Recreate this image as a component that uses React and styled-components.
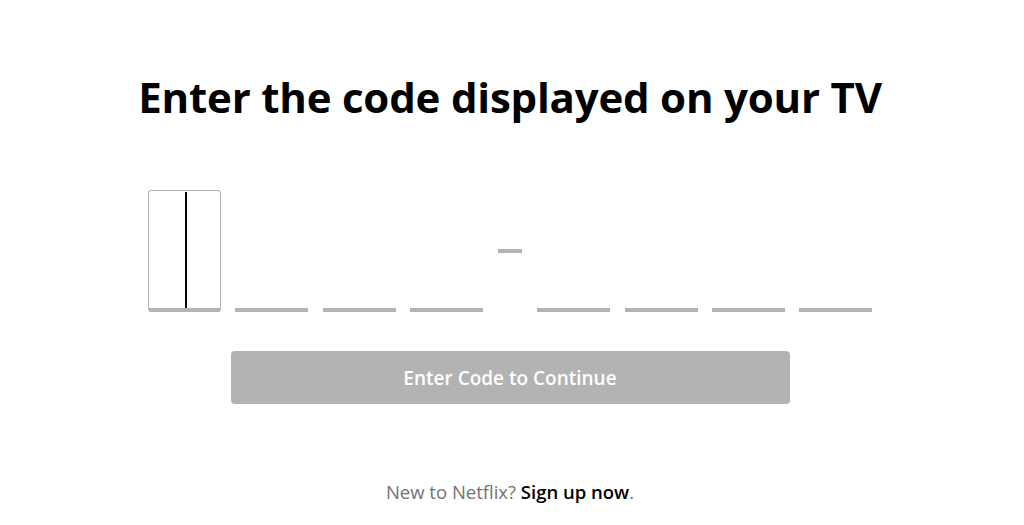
import * as React from 'react'
import styled, { createGlobalStyle } from 'styled-components'

const Global = createGlobalStyle`
  body {
    margin: 0;
    background: #fff;
    font-family: "Open Sans", "Noto Sans", "Liberation Sans", sans-serif;
  }
`

const Page = styled.main`
  display: flex;
  flex-direction: column;
  align-items: center;
  padding: 73px 4px 0 0;
`

const Title = styled.h1`
  margin: 0;
  font-size: 42px;
  line-height: 48px;
  font-weight: 700;
  color: #000;
  letter-spacing: -0.2px;
`

const CodeRow = styled.div`
  display: flex;
  align-items: stretch;
  gap: 14.25px;
  margin-top: 69px;
  height: 122px;
`

const Cell = styled.div`
  position: relative;
  width: 73px;
  box-sizing: border-box;
  border-bottom: 4px solid #b3b3b3;
  border-radius: ${p => (p.$active ? '3px' : '0')};
  border-top: ${p => (p.$active ? '1px solid #b3b3b3' : 'none')};
  border-left: ${p => (p.$active ? '1px solid #b3b3b3' : 'none')};
  border-right: ${p => (p.$active ? '1px solid #b3b3b3' : 'none')};
`

const Caret = styled.span`
  position: absolute;
  left: 50%;
  top: 1px;
  bottom: 0;
  width: 2px;
  background: #000;
`

const Separator = styled.div`
  width: 26px;
  display: flex;
  justify-content: center;
  padding-top: 59px;
  box-sizing: border-box;
`

const Dash = styled.span`
  display: block;
  width: 24px;
  height: 4px;
  background: #b3b3b3;
`

const Button = styled.button`
  margin-top: 39px;
  width: 559px;
  height: 53px;
  border: none;
  border-radius: 4px;
  background: #b3b3b3;
  color: #fff;
  font-family: inherit;
  font-size: 19px;
  font-weight: 600;
  cursor: default;
`

const Footer = styled.p`
  margin: 76px 0 0;
  font-size: 18.5px;
  line-height: 24px;
  color: #737373;
`

const SignUp = styled.a`
  color: #000;
  font-weight: 600;
  text-decoration: none;
`

export default function App() {
  const cells = [0, 1, 2, 3]
  return (
    <>
      <Global />
      <Page>
        <Title>Enter the code displayed on your TV</Title>
        <CodeRow>
          {cells.map(i => (
            <Cell key={'a' + i} $active={i === 0}>
              {i === 0 && <Caret />}
            </Cell>
          ))}
          <Separator>
            <Dash />
          </Separator>
          {cells.map(i => (
            <Cell key={'b' + i} />
          ))}
        </CodeRow>
        <Button disabled>Enter Code to Continue</Button>
        <Footer>
          New to Netflix? <SignUp href="#">Sign up now</SignUp>.
        </Footer>
      </Page>
    </>
  )
}
